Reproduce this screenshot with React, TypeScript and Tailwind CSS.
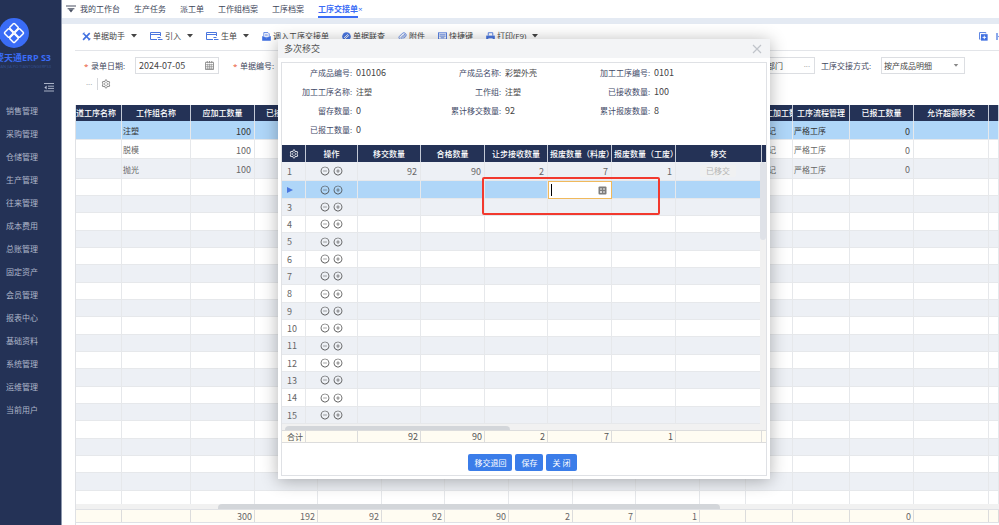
import React, { useState } from "react";
import { AiOutlineSetting, AiOutlineMinusCircle, AiOutlinePlusCircle } from "react-icons/ai";
import clsx from "clsx";

const MENU = [
  "销售管理",
  "采购管理",
  "仓储管理",
  "生产管理",
  "往来管理",
  "成本费用",
  "总账管理",
  "固定资产",
  "会员管理",
  "报表中心",
  "基础资料",
  "系统管理",
  "运维管理",
  "当前用户",
];

const TABS = ["我的工作台", "生产任务", "派工单", "工作组档案", "工序档案"];

interface Column {
  title: string;
  width: string;
  align?: "left" | "right";
  total?: string;
}

const MAIN_COLUMNS: Column[] = [
  { title: "上道工序名称", width: "w-[46px]" },
  { title: "工作组名称", width: "w-[69px]", align: "left" },
  { title: "应加工数量", width: "w-[64px]", align: "right", total: "300" },
  { title: "已接收数量", width: "w-[63px]", align: "right", total: "192" },
  { title: "", width: "w-[64px]", align: "right", total: "92" },
  { title: "", width: "w-[63px]", align: "right", total: "92" },
  { title: "", width: "w-[64px]", align: "right", total: "90" },
  { title: "", width: "w-[64px]", align: "right", total: "2" },
  { title: "", width: "w-[63px]", align: "right", total: "7" },
  { title: "", width: "w-[64px]", align: "right", total: "1" },
  { title: "", width: "w-[46px]" },
  { title: "首道工加工数", width: "w-[47px]", align: "left" },
  { title: "工序流程管理", width: "w-[57px]", align: "left" },
  { title: "已报工数量", width: "w-[64px]", align: "right", total: "0" },
  { title: "允许超额移交", width: "w-[75px]" },
  { title: "", width: "" },
];

const MAIN_ROWS = ["注塑", "脱模", "抛光"].map((group) => [
  "", group, "100", "", "", "", "", "", "", "", "", "不登记", "严格工序", "0", "", "",
]);

const DIALOG_COLUMNS: Column[] = [
  { title: "移交数量", width: "w-[63px]", total: "92" },
  { title: "合格数量", width: "w-[64px]", total: "90" },
  { title: "让步接收数量", width: "w-[63px]", total: "2" },
  { title: "报废数量（料废）", width: "w-[64px]", total: "7" },
  { title: "报废数量（工废）", width: "w-[64px]", total: "1" },
];

const INFO = [
  ["产成品编号:", "010106"],
  ["产成品名称:", "彩塑外壳"],
  ["加工工序编号:", "0101"],
  ["加工工序名称:", "注塑"],
  ["工作组:", "注塑"],
  ["已接收数量:", "100"],
  ["留存数量:", "0"],
  ["累计移交数量:", "92"],
  ["累计报废数量:", "8"],
  ["已报工数量:", "0"],
];

// ---------- icons ----------

const Caret = () => (
  <svg viewBox="0 0 6 4" className="w-[6px] h-[4px] ml-1" fill="#444">
    <path d="M0 0h6L3 3.6z" />
  </svg>
);

const ToolsIcon = () => (
  <svg viewBox="0 0 10 10" className="w-[9px] h-[9px]" fill="none" stroke="#3f6fe0">
    <path d="M2.2 2.2 8.6 8.6" strokeWidth="1.8" />
    <path d="M8.6 1.2 1.2 8.8" strokeWidth="1.8" />
    <path d="M.8 2.6 2.8.8M7.2 9.2l2-2" strokeWidth="1.2" />
  </svg>
);

const ImportIcon = () => (
  <svg viewBox="0 0 13 10" className="w-[13px] h-[10px]" fill="none" stroke="#4a76df">
    <path d="M10.5 5V1.5H.5v7H7M.5 3.5h10" />
    <path d="M8 8.5h4.5M7.5 6.5h3" strokeWidth="1.2" />
  </svg>
);

const InboxIcon = () => (
  <svg viewBox="0 0 10 10" className="w-[9px] h-[9px]">
    <path d="M2 .6h4.6L8 2v4H2z" fill="#fff" stroke="#4a76df" strokeWidth=".9" />
    <path d="M3.4 2.6h3M3.4 4h3" stroke="#4a76df" strokeWidth=".6" />
    <path d="M.2 4.4 5 7l4.8-2.6v5.2H.2z" fill="#3f6fe0" />
  </svg>
);

const LinkIcon = () => (
  <svg viewBox="0 0 10 10" className="w-[9px] h-[9px]">
    <circle cx="5" cy="5" r="4.8" fill="#4a76df" />
    <path d="M2.6 6.2 6.4 2.8M3.6 7.4l3.8-3.4" stroke="#fff" strokeWidth="1" strokeLinecap="round" />
  </svg>
);

const ClipIcon = () => (
  <svg viewBox="0 0 10 10" className="w-[9px] h-[9px]" fill="none" stroke="#4a76df" strokeWidth=".9">
    <path d="M3 6.6 6.6 3c.9-.9 1.9.1 1 1L4.4 7.4C2.8 9-.2 7 1.6 4.8L5 1.4C6.8-.2 10.4 2 8.6 4.8L6.4 7.2" />
  </svg>
);

const KeyboardIcon = () => (
  <svg viewBox="0 0 10 8" className="w-[9px] h-[8px]">
    <rect x=".5" y=".5" width="9" height="7" fill="#fff" stroke="#4a76df" />
    <path d="M1.6 2.6h6.8M1.6 4.2h6.8M3 6h4" stroke="#4a76df" strokeWidth=".9" />
  </svg>
);

const PrinterIcon = () => (
  <svg viewBox="0 0 10 10" className="w-[9px] h-[9px]">
    <path d="M2.5 4V.8h5V4" fill="#fff" stroke="#4a76df" />
    <path d="M.2 4h9.6v4H.2z" fill="#4a76df" />
    <path d="M2.2 6.6h5.6v2.8H2.2z" fill="#fff" stroke="#4a76df" strokeWidth=".8" />
  </svg>
);

const CopyAddIcon = () => (
  <svg viewBox="0 0 10 10" className="w-[9px] h-[9px]">
    <path d="M1.6 8H.6V.6h7v1" fill="none" stroke="#4a76df" strokeWidth="1" />
    <rect x="2.2" y="2.4" width="7.4" height="7.2" fill="#3f6fe0" />
    <path d="M5.9 4v4M3.9 6h4" stroke="#fff" strokeWidth="1" />
  </svg>
);

const FirstIcon = () => (
  <svg viewBox="0 0 9 9" className="w-[9px] h-[9px]" fill="#3f6fe0">
    <path d="M.4 1h1.2v7H.4zM2 4.5 6 1.4v2.2h3v1.8H6v2.2z" />
  </svg>
);

const CalendarIcon = () => (
  <svg viewBox="0 0 10 10" className="w-[9px] h-[9px]" fill="none" stroke="#888">
    <path d="M.5 1.5h9v8h-9zM2.5 0v2M5 0v2M7.5 0v2" />
    <path d="M.5 4h9M.5 6h9M.5 8h9M3 3v6M5 3v6M7 3v6" strokeWidth=".7" />
  </svg>
);

const CalculatorIcon = () => (
  <svg viewBox="0 0 9 9" className="w-[9px] h-[9px]">
    <rect x=".5" y=".5" width="8" height="8" rx="1" fill="#7d7d7d" />
    <path d="M2 3h2M5 3h2M2 6h2M5 6h2M3 5v2" stroke="#fff" strokeWidth=".9" />
  </svg>
);

const LogoIcon = () => (
  <svg viewBox="0 0 30 30" className="w-[30px] h-[30px] shrink-0 self-start -ml-px">
    <circle cx="15" cy="15" r="15" fill="#3a6cf6" />
    <g fill="none" stroke="#fff" strokeWidth="1.5" strokeLinejoin="round" transform="translate(15 15) rotate(45)">
      <rect x="-7" y="-7" width="6.6" height="6.6" rx="1" />
      <rect x=".4" y="-7" width="6.6" height="6.6" rx="1" />
      <rect x="-7" y=".4" width="6.6" height="6.6" rx="1" />
      <rect x=".4" y=".4" width="6.6" height="6.6" rx="1" />
    </g>
  </svg>
);

const TOOLS = [
  { label: "单据助手", icon: <ToolsIcon />, caret: true },
  { label: "引入", icon: <ImportIcon />, caret: true },
  { label: "生单", icon: <ImportIcon />, caret: true },
  { label: "调入工序交接单", icon: <InboxIcon /> },
  { label: "单据联查", icon: <LinkIcon /> },
  { label: "附件", icon: <ClipIcon /> },
  { label: "快捷键", icon: <KeyboardIcon /> },
  { label: "打印(F9)", icon: <PrinterIcon />, caret: true },
];

// ---------- layout ----------

const Sidebar = () => (
  <aside className="w-[62px] shrink-0 min-h-screen bg-[#243256] border-r border-[#8d97ad] flex flex-col overflow-hidden pt-[18px]">
    <LogoIcon />
    <div className="self-end pr-[10px] mt-[5px] text-right whitespace-nowrap">
      <div className="text-[9px] leading-[10px] font-bold text-[#3a6cf6]">管家婆天通ERP S3</div>
      <div className="text-[4px] leading-[8px] text-[#34508f]">GUAN JIA PO TIANTONGERPS3</div>
    </div>
    <button aria-label="收起菜单" className="self-end mr-[7px] mt-[11px]">
      <svg viewBox="0 0 10 10" className="w-[10px] h-[10px]" fill="none" stroke="#b9c1d3">
        <path d="M0 1.5h10M4 4.2h6M4 6.4h6M0 9h10" strokeWidth=".9" />
        <path d="M2.6 3.4v4L.4 5.4z" fill="#b9c1d3" stroke="none" />
      </svg>
    </button>
    <nav className="mt-[7px] flex flex-col">
      {MENU.map((item) => (
        <a key={item} href="#" className="h-[23px] pl-[6px] flex items-center text-[#aeb6c9]">
          {item}
        </a>
      ))}
    </nav>
  </aside>
);

const TabBar = () => (
  <div className="h-6 border-b-6 border-[#e4eaf3] bg-white flex items-stretch gap-[14px] pl-1 text-[#3c4458]">
    <div className="flex items-center gap-1">
      <svg viewBox="0 0 10 8" className="w-[10px] h-[8px]" fill="#4a5163">
        <path d="M0 .6h10v1H0zM1.6 3.2h6.8v1H1.6zM2.6 4.6h4.8L5 7.6z" />
      </svg>
      <a href="#">{TABS[0]}</a>
    </div>
    {TABS.slice(1).map((tab) => (
      <a key={tab} href="#" className="flex items-center">
        {tab}
      </a>
    ))}
    <div className="flex items-stretch font-bold text-[#3a6cf6]">
      <a href="#" className="flex items-center border-b-2 pt-[2px] border-[#3a6cf6]">
        工序交接单
      </a>
      <button aria-label="关闭标签" className="font-normal">×</button>
    </div>
  </div>
);

const Toolbar = () => (
  <div className="h-[27px] pb-[2px] border-b border-[#e3e5e9] ml-[13px] pl-[7px] flex items-center justify-between text-[#444]">
    <div className="flex items-center gap-[13px]">
      {TOOLS.map((tool) => (
        <button key={tool.label} className="flex items-center gap-[2px] whitespace-nowrap">
          {tool.icon}
          <span>{tool.label}</span>
          {tool.caret && <Caret />}
        </button>
      ))}
    </div>
    <div className="flex items-center gap-2 -mr-[6px]">
      <CopyAddIcon />
      <FirstIcon />
    </div>
  </div>
);

const Required = () => <span className="text-[#e8502e] w-[7px]">*</span>;

const Filters = () => {
  const [date, setDate] = useState("2024-07-05");
  return (
    <div className="pl-[22px] pr-[34px] pt-[6px] text-[#3f4860]">
      <div className="flex items-center whitespace-nowrap">
        <Required />
        <label htmlFor="bill-date" className="w-[44px]">录单日期:</label>
        <div className="w-[84px] h-[17px] border border-[#dcdee2] flex items-center pl-[3px] pr-1">
          <input
            id="bill-date"
            value={date}
            onChange={(e) => setDate(e.target.value)}
            className="min-w-0 flex-1 text-[9px] font-['Noto_Sans_CJK_SC',sans-serif] text-[#444] outline-none"
          />
          <CalendarIcon />
        </div>
        <span className="w-[14px]" />
        <Required />
        <label htmlFor="bill-no" className="w-[42px]">单据编号:</label>
        <input id="bill-no" className="min-w-0 flex-1 h-[17px] border border-[#dcdee2]" />
        <div className="ml-2 w-[84px] h-[17px] border border-[#dcdee2] flex items-center pl-[3px] pr-1">
          <input aria-label="部门" defaultValue="生产管理部门" className="min-w-0 flex-1 text-[#444] outline-none" />
          <span className="text-[#888]">···</span>
        </div>
        <label htmlFor="mode" className="ml-[6px] w-[60px]">工序交接方式:</label>
        <div className="relative w-[84px] h-[17px]">
          <select id="mode" className="w-full h-full border border-[#dcdee2] pl-[2px] appearance-none text-[#444]">
            <option>按产成品明细</option>
          </select>
          <svg viewBox="0 0 6 4" className="absolute right-[6px] top-[7px] w-[6px] h-[3px]" fill="#888">
            <path d="M0 0h6L3 3.6z" />
          </svg>
        </div>
      </div>
      <div className="h-[20px] flex items-center gap-[3px] pl-[2px]">
        <span className="text-[#888]">···</span>
        <span className="h-3 ml-[2px] border-l border-[#d5d7db]" />
        <button aria-label="设置">
          <AiOutlineSetting className="w-[10px] h-[10px] text-[#777]" />
        </button>
      </div>
    </div>
  );
};

const EMPTY_COUNT = 19;

const MainTable = () => (
  <div className="ml-[13px] mt-[11px] flex-1 min-h-0 flex flex-col border-l border-[#dfe1e5]">
    <div className="h-[399px] overflow-hidden">
      <table className="table-fixed w-full border-separate border-spacing-0 leading-none">
        <thead>
          <tr className="h-4 bg-[#243256] text-white">
            {MAIN_COLUMNS.map((col, i) => (
              <th
                key={i}
                className={clsx(
                  "p-0 font-medium whitespace-nowrap overflow-hidden border-r border-[#c3c9d6]",
                  col.width,
                  i === 0 && "[direction:rtl] pr-[6px] text-right",
                  i === 11 && "text-left pl-[3px]"
                )}
              >
                {col.title}
              </th>
            ))}
          </tr>
        </thead>
        <tbody className="text-[#666]">
          {MAIN_ROWS.map((row, r) => (
            <tr
              key={r}
              className={clsx(
                r === 2 ? "h-5" : "h-[19px]",
                r === 0 ? "bg-[#afd6f8] text-[#333]" : r === 2 && "bg-[#edf0f5]"
              )}
            >
              {row.map((cell, c) => (
                <td
                  key={c}
                  className={clsx(
                    "p-0 pt-[2px] border-r border-b border-[#e6e8eb]",
                    MAIN_COLUMNS[c].align === "right"
                      ? "text-right pr-[3px] text-[9px] font-['Noto_Sans_CJK_SC',sans-serif]"
                      : c === 11
                        ? "pl-[6px]"
                        : "pl-px"
                  )}
                >
                  {cell}
                </td>
              ))}
            </tr>
          ))}
          {Array.from({ length: EMPTY_COUNT }, (_, r) => (
            <tr key={r} className={clsx(r % 3 === 2 ? "h-[18px]" : "h-[17px]", r % 2 === 1 && "bg-[#edf0f5]")}>
              {MAIN_COLUMNS.map((_, c) => (
                <td key={c} className="p-0 border-r border-b border-[#e6e8eb]" />
              ))}
            </tr>
          ))}
        </tbody>
      </table>
    </div>
    <div className="h-[5px] bg-[#f1f1f1] pl-[142px]">
      <div className="h-full w-[502px] bg-[#d3d6da] rounded-t-sm" />
    </div>
    <table className="table-fixed w-full border-separate border-spacing-0 leading-none border-y border-[#dfe1e5]">
      <tbody className="text-[9px] font-['Noto_Sans_CJK_SC',sans-serif]">
        <tr className="h-3 bg-[#fffcf2] text-[#666]">
          {MAIN_COLUMNS.map((col, i) => (
            <td key={i} className={clsx("p-0 pr-[2px] text-right border-r border-[#dcdcdc]", col.width)}>
              {col.total}
            </td>
          ))}
        </tr>
      </tbody>
    </table>
  </div>
);

const RowActions = () => (
  <div className="flex items-center justify-center gap-[3px] text-[#444]">
    <button aria-label="删除行">
      <AiOutlineMinusCircle className="w-[10px] h-[10px]" />
    </button>
    <button aria-label="增加行">
      <AiOutlinePlusCircle className="w-[10px] h-[10px]" />
    </button>
  </div>
);

const FIRST_ROW = ["92", "90", "2", "7", "1"];

const DialogTable = () => {
  const [scrap, setScrap] = useState("");
  return (
    <div>
      <div className="flex bg-[#243256]">
        <table className="table-fixed flex-1 w-full border-separate border-spacing-0 leading-none">
          <thead>
            <tr className="h-[17px] text-white">
              <th className="p-0 w-[24px] border-r border-[#c3c9d6]">
                <AiOutlineSetting className="w-[10px] h-[10px] mx-auto" />
              </th>
              <th className="p-0 w-[52px] font-medium border-r border-[#c3c9d6]">操作</th>
              {DIALOG_COLUMNS.map((col, c) => (
                <th
                  key={col.title}
                  className={clsx(
                    "p-0 font-medium whitespace-nowrap border-r border-[#c3c9d6]",
                    col.width,
                    c > 2 && "text-left pl-[2px]"
                  )}
                >
                  {col.title}
                </th>
              ))}
              <th className="p-0 font-medium border-r border-[#c3c9d6]">移交</th>
            </tr>
          </thead>
        </table>
        <div className="w-[4px]" />
      </div>
      <div className="flex">
        <table className="table-fixed flex-1 w-full border-separate border-spacing-0 leading-none text-[#666]">
          <colgroup>
            <col className="w-[24px]" />
            <col className="w-[52px]" />
            {DIALOG_COLUMNS.map((col) => (
              <col key={col.title} className={col.width} />
            ))}
            <col />
          </colgroup>
          <tbody className="text-[9px] font-['Noto_Sans_CJK_SC',sans-serif]">
            {Array.from({ length: 15 }, (_, r) => (
              <tr
                key={r}
                className={clsx(
                  r === 0 ? "h-[19px]" : r % 3 === 1 ? "h-[18px]" : "h-[17px]",
                  r === 1 ? "bg-[#afd6f8]" : r % 2 === 0 && "bg-[#edf0f5]"
                )}
              >
                <td className="p-0 pl-[5px] border-r border-b border-[#e6e8eb]">
                  {r === 1 ? (
                    <svg viewBox="0 0 6 6" className="w-[6px] h-[6px]" fill="#4a76df">
                      <path d="M0 0v6l6-3z" />
                    </svg>
                  ) : (
                    r + 1
                  )}
                </td>
                <td className="p-0 border-r border-b border-[#e6e8eb]">
                  <RowActions />
                </td>
                {DIALOG_COLUMNS.map((col, c) =>
                  r === 1 && c === 3 ? (
                    <td key={col.title} className="p-0">
                      <div className="h-[18px] bg-white border border-[#f0b95c] flex items-center pl-[2px] pr-1">
                        <span className="h-3 border-l border-black" />
                        <input
                          aria-label={col.title}
                          value={scrap}
                          onChange={(e) => setScrap(e.target.value)}
                          className="min-w-0 flex-1 outline-none"
                        />
                        <CalculatorIcon />
                      </div>
                    </td>
                  ) : (
                    <td key={col.title} className="p-0 pr-[3px] text-right border-r border-b border-[#e6e8eb]">
                      {r === 0 && FIRST_ROW[c]}
                    </td>
                  )
                )}
                <td className="p-0 border-b border-[#e6e8eb] text-center">
                  {r === 0 && (
                    <button disabled className="h-3 px-[6px] rounded-xs bg-[#f0f1f2] text-[8px] text-[#b5b5b5] align-middle">
                      已移交
                    </button>
                  )}
                </td>
              </tr>
            ))}
          </tbody>
        </table>
        <div className="w-[6px] bg-[#f1f1f1]">
          <div className="h-[78px] bg-[#dfe2e8] rounded-sm" />
        </div>
      </div>
      <div className="h-[6px] bg-[#f1f1f1] pt-[2px] pl-[3px]">
        <div className="h-full w-[225px] bg-[#d3d6da] rounded-t-sm" />
      </div>
      <div className="flex bg-[#fffcf2] border-y border-[#dcdcdc]">
        <table className="table-fixed flex-1 w-full border-separate border-spacing-0 leading-none text-[#555]">
          <tbody>
            <tr className="h-[11px]">
              <td className="p-0 pl-[5px] w-[24px] whitespace-nowrap border-r border-[#dcdcdc]">合计</td>
              <td className="p-0 w-[52px] border-r border-[#dcdcdc]" />
              {DIALOG_COLUMNS.map((col) => (
                <td
                  key={col.title}
                  className={clsx(
                    "p-0 pr-[2px] text-right text-[9px] font-['Noto_Sans_CJK_SC',sans-serif] border-r border-[#dcdcdc]",
                    col.width
                  )}
                >
                  {col.total}
                </td>
              ))}
              <td className="p-0 border-r border-[#dcdcdc]" />
            </tr>
          </tbody>
        </table>
        <div className="w-[4px]" />
      </div>
    </div>
  );
};

const TransferDialog = () => (
  <div
    role="dialog"
    aria-label="多次移交"
    className="absolute left-[278px] top-[39px] w-[492px] h-[440px] flex flex-col bg-white shadow-[0_2px_16px_rgba(0,0,0,0.3)]"
  >
    <div className="h-[19px] px-[6px] bg-[#f3f4f6] flex items-center justify-between text-[9px] text-[#555]">
      <span>多次移交</span>
      <button aria-label="关闭">
        <svg viewBox="0 0 10 10" className="w-[10px] h-[10px] mr-[2px]" stroke="#c0c4ca" strokeWidth="1.2">
          <path d="M1 1l8 8M9 1L1 9" />
        </svg>
      </button>
    </div>
    <div className="mx-[3px] mt-1 mb-[3px] flex-1 border border-[#dfe1e5]">
      <div className="h-[82px] pr-[37px] pb-[5px] grid grid-cols-3 grid-rows-4">
        {INFO.map(([label, value]) => (
          <div key={label} className="flex items-center whitespace-nowrap">
            <span className="w-[70px] text-right text-[#3f4a68]">{label}</span>
            <span
              className={clsx(
                "pl-1 text-[#444]",
                /^\d+$/.test(value) && "text-[9px] font-['Noto_Sans_CJK_SC',sans-serif]"
              )}
            >
              {value}
            </span>
          </div>
        ))}
      </div>
      <DialogTable />
      <div className="mt-[11px] pr-[3px] flex justify-center gap-[3px] text-white">
        <button className="h-[17px] px-[6px] rounded-xs bg-[#3b7de9]">移交退回</button>
        <button className="h-[17px] px-[6px] rounded-xs bg-[#3b7de9]">保存</button>
        <button className="h-[17px] px-[6px] rounded-xs bg-[#3b7de9]">关 闭</button>
      </div>
    </div>
    <div className="absolute left-[204px] top-[138px] w-[178px] h-[38px] border-2 border-[#f2392e] rounded-xs pointer-events-none" />
  </div>
);

export default function App() {
  return (
    <div className="relative h-screen overflow-hidden flex bg-white text-[8px] leading-[12px] font-['Open_Sans','Noto_Sans_CJK_SC',sans-serif]">
      <Sidebar />
      <main className="flex-1 min-w-0 flex flex-col">
        <TabBar />
        <Toolbar />
        <Filters />
        <MainTable />
      </main>
      <TransferDialog />
    </div>
  );
}
